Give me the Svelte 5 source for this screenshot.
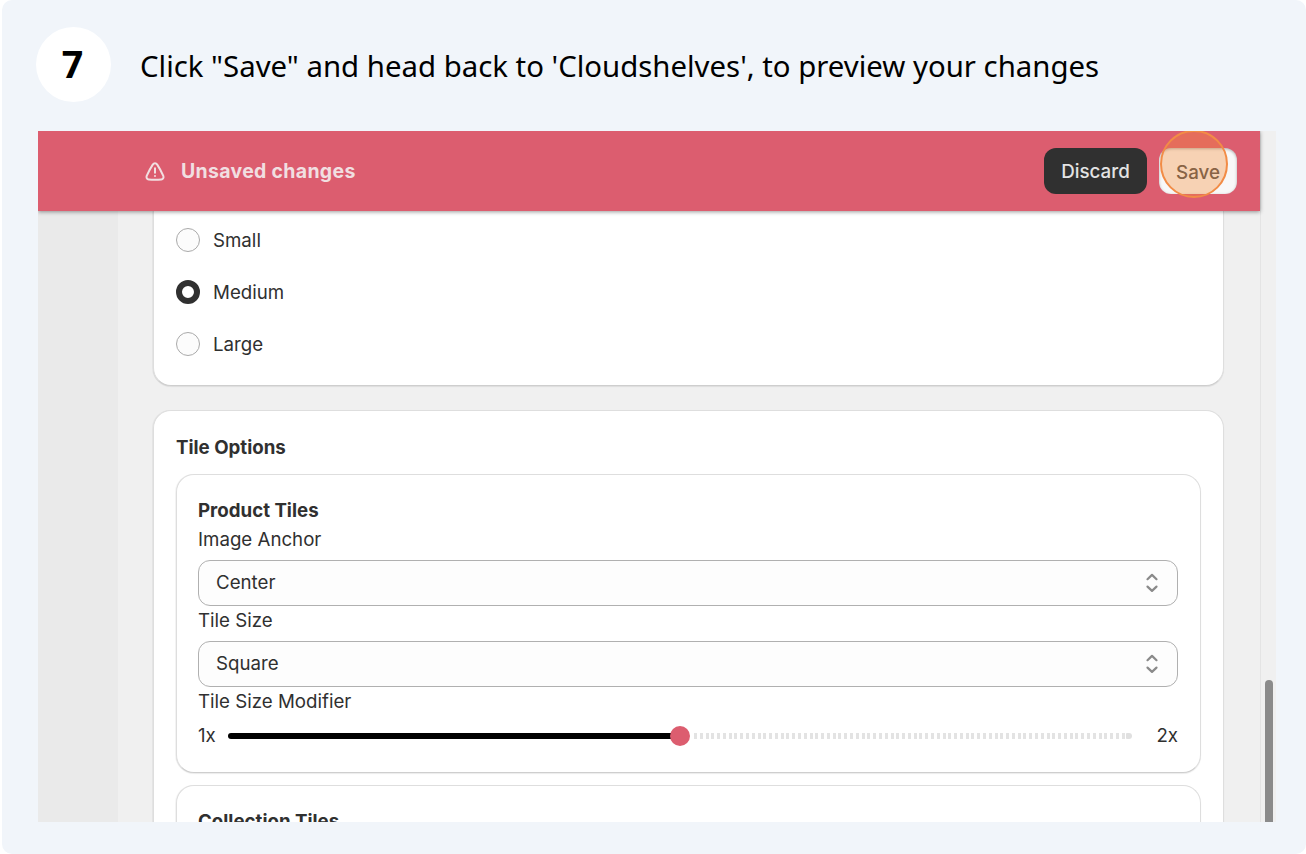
<script lang="ts">
	const sizes = ['Small', 'Medium', 'Large'];
	const fields = [
		{ label: 'Image Anchor', value: 'Center' },
		{ label: 'Tile Size', value: 'Square' }
	];

	let selectedSize = $state('Medium');
	let modifier = $state(1.5);
</script>

<div class="step">
	<header class="step-header">
		<span class="step-number">7</span>
		<h1>Click "Save" and head back to 'Cloudshelves', to preview your changes</h1>
	</header>

	<div class="capture">
		<div class="window">
			<div class="save-bar">
				<svg class="warning" viewBox="0 0 20 20" fill="none" stroke="currentColor" stroke-width="2" stroke-linecap="round" stroke-linejoin="round">
					<path d="M7.9 2.4a2.4 2.4 0 0 1 4.2 0c2.300 3.500 4.400 7.500 6.200 11.500.7 1.600-.3 3.300-2 3.500-4.200.5-8.400.5-12.600 0-1.700-.2-2.700-1.900-2-3.500C3.500 9.900 5.600 5.900 7.900 2.400Z" />
					<path d="M10 6.200v4.500M10 14v.1" />
				</svg>
				<span class="message">Unsaved changes</span>
				<button class="btn discard">Discard</button>
				<button class="btn save">
					<span>Save</span>
					<i class="click-marker"></i>
				</button>
			</div>

			<div class="body">
				<div class="sidebar"></div>
				<main>
					<section class="card sizes">
						{#each sizes as size}
							<button class="choice" onclick={() => (selectedSize = size)}>
								<i class="radio" class:checked={size === selectedSize}></i>
								<span>{size}</span>
							</button>
						{/each}
					</section>

					<section class="card options">
						<h2>Tile Options</h2>
						<div class="card tile-group">
							<h3>Product Tiles</h3>
							{#each fields as field}
								<div class="label">{field.label}</div>
								<div class="select">
									<span>{field.value}</span>
									<svg viewBox="0 0 14 20" fill="none" stroke="currentColor" stroke-width="2.2" stroke-linecap="round" stroke-linejoin="round">
										<path d="M2.500 6.200 7 1.900l4.500 4.300M2.500 13.600 7 17.900l4.500-4.300" />
									</svg>
								</div>
							{/each}
							<div class="label">Tile Size Modifier</div>
							<div class="slider">
								<span class="min">1x</span>
								<div class="track">
									<div class="filled" style="width: {(modifier - 1) * 100}%"></div>
									<i class="thumb"></i>
									<div class="dashes"></div>
									<i class="cap"></i>
								</div>
								<span class="max">2x</span>
							</div>
						</div>
						<div class="card tile-group next">
							<h3>Collection Tiles</h3>
						</div>
					</section>
				</main>
			</div>
		</div>
		<div class="scrollbar"><div class="handle"></div></div>
	</div>
</div>

<style>
	:global(body) {
		background: #fff;
	}

	.step {
		box-sizing: border-box;
		height: 854px;
		margin-left: 2px;
		padding: 27px 30px 32px 36px;
		border-radius: 10px;
		background: #f1f5fa;
		overflow: hidden;
	}

	.step-header {
		display: flex;
		align-items: center;
		height: 75px;
		margin: 0 0 29px -2px;
		font-family: 'Noto Sans', sans-serif;
		color: #000;
	}

	.step-number {
		width: 75px;
		height: 75px;
		margin-right: 29px;
		border-radius: 50%;
		background: #fff;
		font-size: 37.5px;
		font-weight: 700;
		line-height: 73px;
		text-align: center;
		text-indent: -2px;
	}

	h1 {
		margin: 2px 0 0;
		font-size: 29.37px;
		font-weight: 400;
		line-height: 40px;
		white-space: nowrap;
	}

	.capture {
		display: flex;
		width: 1238px;
		height: 691px;
		overflow: hidden;
		font-family: Inter, sans-serif;
		font-size: 18.7px;
		font-weight: 440;
		color: #303030;
	}

	.window {
		flex: none;
		display: flex;
		flex-direction: column;
		width: 1222px;
	}

	.save-bar {
		position: relative;
		z-index: 1;
		box-sizing: border-box;
		flex: none;
		display: flex;
		align-items: center;
		height: 80px;
		padding: 0 23px 0 107px;
		background: #dc5d6f;
		box-shadow: 0 1px 4px rgba(0, 0, 0, 0.4);
	}

	.warning {
		width: 20px;
		height: 20px;
		margin: 1px 16px 0 0;
		color: #f1dfe1;
	}

	.message {
		flex: 1;
		color: #f1dfe1;
		font-size: 19.5px;
		font-weight: 650;
		letter-spacing: 0.3px;
	}

	.btn {
		position: relative;
		height: 46px;
		margin: 0 0 0 12px;
		padding: 0;
		border: 0;
		border-radius: 12px;
		font: 550 18.8px Inter, sans-serif;
	}

	.discard {
		width: 103px;
		background: #303030;
		color: #e3e3e3;
	}

	.save {
		width: 78px;
		padding-top: 2px;
		background: #f8f8f8;
		color: #4d4d4d;
		box-shadow: inset 0 1px 3px rgba(0, 0, 0, 0.3);
	}

	.click-marker {
		position: absolute;
		top: -18px;
		left: 1px;
		box-sizing: border-box;
		width: 68px;
		height: 68px;
		border: 2px solid #f28c46;
		border-radius: 50%;
		background: rgba(247, 139, 55, 0.35);
	}

	.body {
		flex: 1;
		display: flex;
		min-height: 0;
	}

	.sidebar {
		flex: none;
		width: 80px;
		background: #eaeaea;
	}

	main {
		flex: 1;
		padding: 0 36px 0 35px;
		background: #f0f0f0;
	}

	.card {
		box-sizing: border-box;
		border: 1px solid #dedede;
		border-bottom-color: #cecece;
		border-radius: 18px;
		background: #fff;
		box-shadow: -1px 0 0 rgba(0, 0, 0, 0.04), 0 1px 1px rgba(0, 0, 0, 0.08);
	}

	.sizes {
		height: 175px;
		padding: 3px 22px;
		border-top: 0;
		border-radius: 0 0 18px 18px;
	}

	.choice {
		display: flex;
		align-items: center;
		gap: 13px;
		height: 52px;
		padding: 0;
		border: 0;
		background: none;
		font: inherit;
		color: inherit;
	}

	.radio {
		box-sizing: border-box;
		width: 24px;
		height: 24px;
		border: 1px solid #aaa;
		border-radius: 50%;
		background: #fcfcfc;
	}

	.radio.checked {
		border: 6px solid #303030;
		background: #fff;
	}

	.options {
		height: 500px;
		margin-top: 24px;
		padding: 22px;
	}

	h2,
	h3 {
		margin: 0;
		font-size: 18.7px;
		font-weight: 650;
		line-height: 29px;
	}

	h2 {
		margin-bottom: 12px;
	}

	.tile-group {
		height: 299px;
		padding: 21px 22px 21px 21px;
	}

	.next {
		margin-top: 12px;
	}

	.label {
		height: 29px;
		margin-bottom: 6px;
		line-height: 29px;
	}

	.select {
		box-sizing: border-box;
		display: flex;
		align-items: center;
		justify-content: space-between;
		height: 46px;
		padding: 0 18px 1px 17px;
		border: 1px solid #b0b0b0;
		border-radius: 12px;
		background: #fdfdfd;
	}

	.select svg {
		width: 14px;
		height: 20px;
		color: #8a8a8a;
	}

	.slider {
		display: flex;
		align-items: center;
		height: 29px;
		margin-top: -1px;
	}

	.min {
		width: 30px;
	}

	.max {
		width: 46px;
		text-align: right;
	}

	.track {
		flex: 1;
		display: flex;
		align-items: center;
		height: 20px;
	}

	.filled {
		height: 6px;
		border-radius: 3px;
		background: #000;
	}

	.thumb {
		width: 20px;
		height: 20px;
		margin: 0 4px 0 -10px;
		border-radius: 50%;
		background: #dc5d6f;
		z-index: 1;
	}

	.dashes {
		flex: 1;
		height: 6px;
		background: repeating-linear-gradient(90deg, #e3e3e3 0 3px, #fff 3px 5.78px);
	}

	.cap {
		width: 6px;
		height: 6px;
		border-radius: 1px 3px 3px 1px;
		background: #e0e0e0;
	}

	.scrollbar {
		flex: 1;
		padding: 549px 3px 0 4px;
		border-left: 1px solid #e4e4e4;
		background: #f0f0f0;
	}

	.handle {
		height: 160px;
		border-radius: 5px 5px 0 0;
		background: #8b8b8b;
	}
</style>
